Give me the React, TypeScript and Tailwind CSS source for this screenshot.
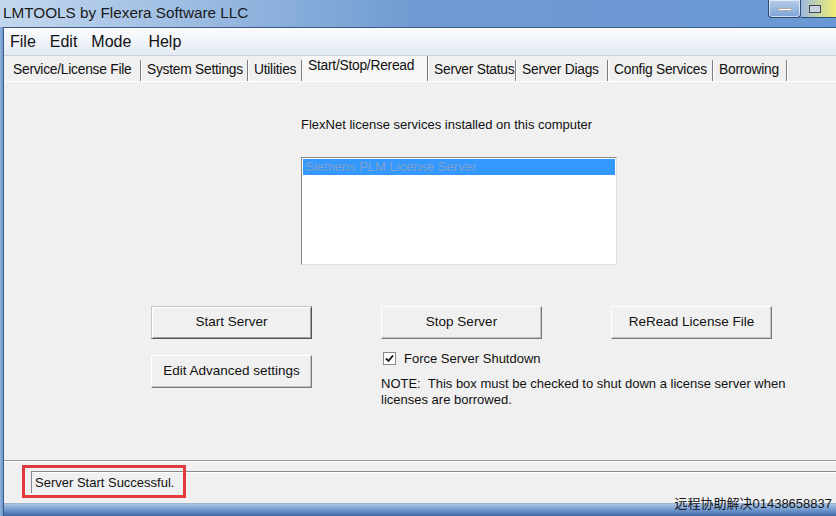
import React from "react";

const tabs = [
  { label: "Service/License File", w: "w-[134px]" },
  { label: "System Settings", w: "w-[107px]" },
  { label: "Utilities", w: "w-[54px]" },
  { label: "Start/Stop/Reread", w: "w-[126px]", active: true },
  { label: "Server Status", w: "w-[88px]" },
  { label: "Server Diags", w: "w-[92px]" },
  { label: "Config Services", w: "w-[105px]" },
  { label: "Borrowing", w: "w-[74px]" },
];

const WinButton = ({ label, focused }: { label: string; focused?: boolean }) => (
  <button
    className={
      "w-[161px] h-[33px] bg-[#f0f0f0] text-[13.5px] text-[#111] border " +
      (focused
        ? "border-t-[#c8c8c8] border-l-[#c8c8c8] border-r-[#555] border-b-[#555] shadow-[inset_1px_1px_0_#fff,inset_-1px_-1px_0_#a0a0a0]"
        : "border-t-[#fff] border-l-[#fff] border-r-[#7a7a7a] border-b-[#7a7a7a] shadow-[inset_-1px_-1px_0_#c0c0c0]")
    }
  >
    {label}
  </button>
);

export default function App() {
  return (
    <div className="w-[836px] h-[516px] overflow-hidden relative bg-[#f0f0f0] font-['Liberation_Sans',Arial,sans-serif] text-[#111]">
      {/* title bar */}
      <div className="h-[27px] flex items-center relative bg-gradient-to-r from-[#c3d8ee] via-[#6f9bd2] to-[#6a98d6]">
        <span className="pl-[3px] text-[15.3px] text-[#1b1b1b]">LMTOOLS by Flexera Software LLC</span>
        <div className="absolute top-0 left-[768px] w-[33px] h-[18px] rounded-b-[4px] border border-t-0 border-[#2f4a70] bg-gradient-to-b from-[#b6cde9] to-[#7da4d6] shadow-[inset_0_0_0_1px_rgba(255,255,255,0.6)] flex items-center justify-center">
          <div className="w-[14px] h-[3px] bg-white border border-[#333]/40 mt-[2px]" />
        </div>
        <div className="absolute top-0 left-[801px] w-[36px] h-[18px] border-b border-[#2f4a70] bg-gradient-to-r from-[#9db9de] via-[#c6d7a0] to-[#f3f070]">
          <div className="w-[12px] h-[8px] border border-[#445] mt-[5px] ml-[8px] bg-[#c8d4e2]" />
        </div>
      </div>

      <div className="flex h-[489px]">
        {/* left frame */}
        <div className="w-[4px] bg-gradient-to-r from-[#8fb3de] to-[#6d96ca] border-r border-[#3c5a80]" />
        <div className="flex-1 flex flex-col border-t border-[#3c5a80]">
          {/* menu bar */}
          <div className="h-[28px] flex items-center gap-[14px] pl-[6px] text-[16px] text-[#111] bg-gradient-to-b from-[#fbfcfe] to-[#e4eaf3] border-b border-[#c9d2de]">
            <span>File</span>
            <span>Edit</span>
            <span>Mode</span>
            <span className="ml-[3px]">Help</span>
          </div>

          {/* tabs */}
          <div className="h-[25px] flex items-end pl-[3px] bg-[#f0f0f0]">
            {tabs.map((t) => (
              <div
                key={t.label}
                className={
                  t.w +
                  " flex items-center pl-[6px] text-[13.8px] tracking-[-0.25px] whitespace-nowrap border-r border-r-[#7d7d7d] shadow-[1px_0_0_#fff] " +
                  (t.active ? "h-[25px] pb-[4px] bg-[#f6f6f6]" : "h-[21px] pb-[1px]")
                }
              >
                {t.label}
              </div>
            ))}
          </div>

          {/* content */}
          <div className="flex-1 flex flex-col pl-[147px] border-t border-white">
            <div className="pl-[150px] pt-[35px] text-[13px] leading-[16px]">
              FlexNet license services installed on this computer
            </div>
            <div className="ml-[150px] mt-[24px] w-[316px] h-[108px] bg-white border border-t-[#8a8a8a] border-l-[#8a8a8a] border-r-[#e0e0e0] border-b-[#e0e0e0] p-[1px]">
              <div className="h-[16px] bg-[#3399ff] text-[13px] leading-[16px] pl-[2px] text-[#7f9fcc]">
                Siemens PLM License Server
              </div>
            </div>

            <div className="flex mt-[41px] gap-[69px]">
              <div className="flex flex-col gap-[16px]">
                <WinButton label="Start Server" focused />
                <WinButton label="Edit Advanced settings" />
              </div>
              <div className="flex flex-col w-[161px]">
                <WinButton label="Stop Server" />
                <label className="flex items-center gap-[8px] mt-[10px] ml-[2px] text-[13px]">
                  <span className="w-[13px] h-[13px] bg-white border border-[#8a8a8a] flex items-center justify-center">
                    <svg width="9" height="9" viewBox="0 0 9 9">
                      <path d="M1 4.5 L3.5 7 L8 1.5" stroke="#111" strokeWidth="1.8" fill="none" />
                    </svg>
                  </span>
                  <span className="whitespace-nowrap">Force Server Shutdown</span>
                </label>
                <p className="w-[430px] mt-[7px] text-[13px] leading-[16px]">
                  NOTE:&nbsp; This box must be checked to shut down a license server when licenses are borrowed.
                </p>
              </div>
              <div>
                <WinButton label="ReRead License File" />
              </div>
            </div>
          </div>

          {/* status bar */}
          <div className="h-[43px] border-t border-t-[#9a9a9a] shadow-[inset_0_1px_0_#fff] bg-[#f0f0f0] pt-[10px] pl-[27px] relative">
            <div className="h-[22px] border-t border-l border-t-[#8a8a8a] border-l-[#8a8a8a] shadow-[inset_0_1px_0_#fff] flex items-center pl-[3px] text-[13px]">
              Server Start Successful.
            </div>
            <div className="absolute left-[18px] top-[4px] w-[164px] h-[33px] border-[3px] border-[#e03a3c]" />
          </div>
          {/* bottom frame */}
          <div className="h-[13px] bg-gradient-to-b from-[#a9c3e4] via-[#6f99cf] to-[#3f66a0] border-t border-[#9fb4d0]" />
        </div>
      </div>

      <div className="absolute right-[4px] bottom-[4px] text-[13px] leading-[16px] text-[#141414] font-['Liberation_Sans','Noto_Sans_CJK_SC',sans-serif]">
        远程协助解决01438658837
      </div>
    </div>
  );
}
